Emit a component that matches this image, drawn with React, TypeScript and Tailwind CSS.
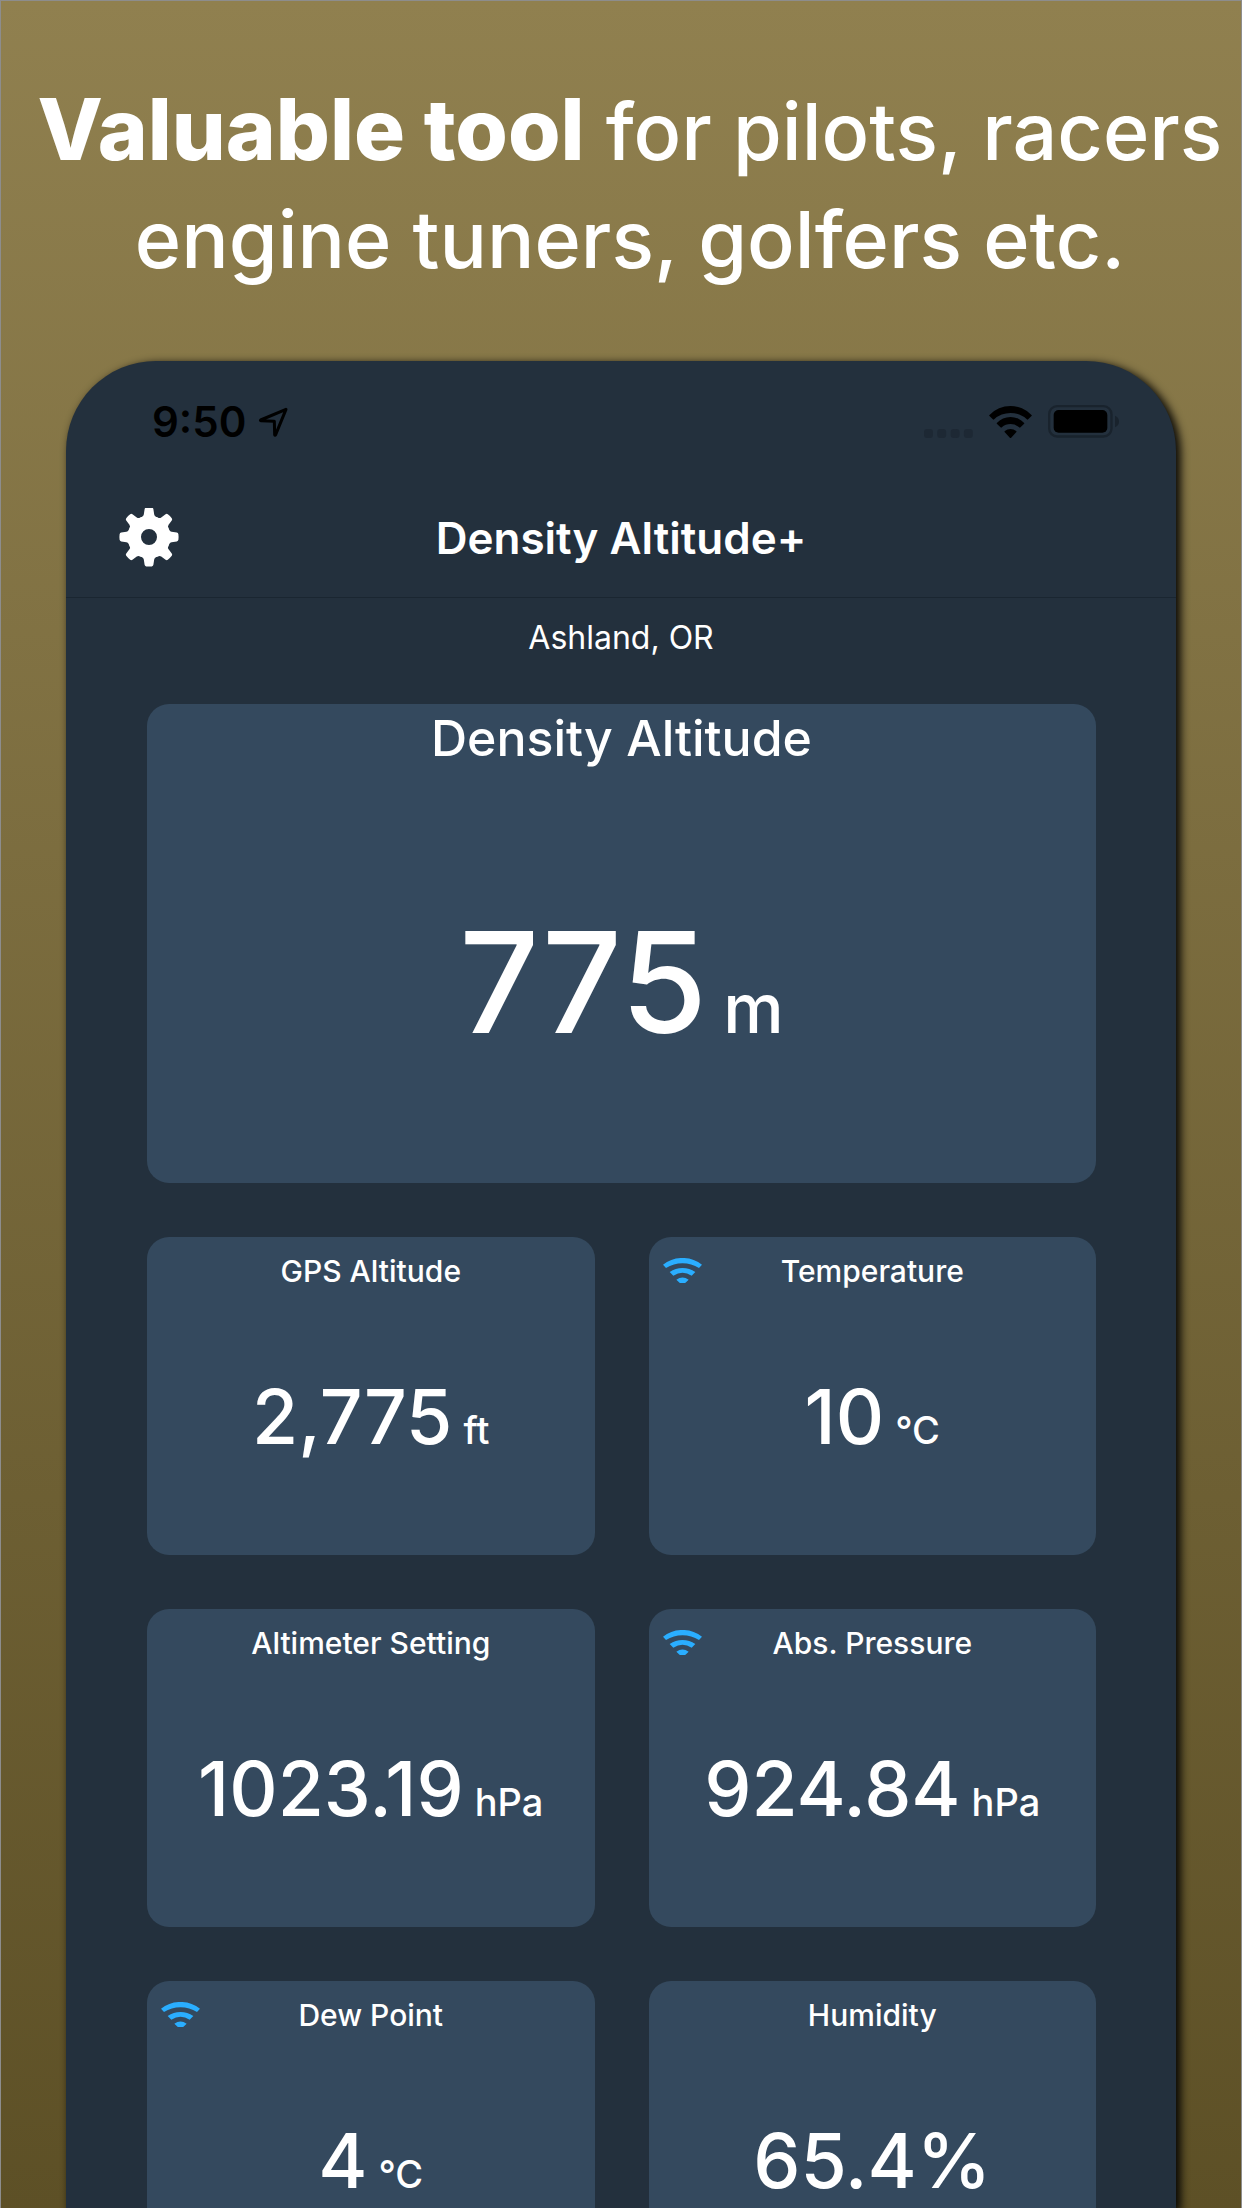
type Reading = {
  label: string;
  value: string;
  unit?: string;
  live?: boolean;
};

const readings: Reading[] = [
  { label: "GPS Altitude", value: "2,775", unit: "ft" },
  { label: "Temperature", value: "10", unit: "°C", live: true },
  { label: "Altimeter Setting", value: "1023.19", unit: "hPa" },
  { label: "Abs. Pressure", value: "924.84", unit: "hPa", live: true },
  { label: "Dew Point", value: "4", unit: "°C", live: true },
  { label: "Humidity", value: "65.4%" },
];

function GearIcon() {
  return (
    <svg className="size-[60px]" viewBox="-30 -29 60 60" fill="white" aria-hidden="true">
      <path
        fillRule="evenodd"
        d="M0-21.5A21.5 21.5 0 1 1 0 21.5A21.5 21.5 0 1 1 0-21.5ZM0-8A8 8 0 1 0 0 8A8 8 0 1 0 0-8Z"
      />
      {[0, 45, 90, 135, 180, 225, 270, 315].map((angle) => (
        <path
          key={angle}
          transform={`rotate(${angle})`}
          d="M-8-19.6Q-5.4-20.6-5.2-22.500L-4.4-27.8Q-4.2-29.2-2.8-29.4Q0-29.8 2.8-29.4Q4.2-29.2 4.4-27.8L5.2-22.500Q5.4-20.6 8-19.6L5-16H-5Z"
        />
      ))}
    </svg>
  );
}

function LocationIcon() {
  return (
    <svg className="size-[30px]" viewBox="620 200 90 90" fill="none" aria-hidden="true">
      <path
        d="M704 207L628 239Q626 241 629 241.500L669 243L670 283Q671 286 673 283Z"
        stroke="black"
        strokeWidth="9"
        strokeLinejoin="round"
      />
    </svg>
  );
}

function SignalDots() {
  return (
    <svg className="h-[9px] w-[49px]" viewBox="0 0 148 27" fill="#1d2834" aria-hidden="true">
      {[0, 40, 80.5, 120.500].map((x) => (
        <rect key={x} x={x} width="27" height="27" rx="9" />
      ))}
    </svg>
  );
}

function StatusWifiIcon() {
  return (
    <svg className="h-8 w-[43px]" viewBox="416 195 128 96" fill="black" aria-hidden="true">
      <path d="M417 222A87 87 0 0 1 543 222Q545 223 543 225L533 235Q531 237 529 235A72 72 0 0 0 431 235Q429 237 427 235L417 225Q415 223 417 222Z" />
      <path d="M439 246A56 56 0 0 1 521 246Q522 247 521 248L510 259Q508 261 506 259A39 39 0 0 0 454 259Q452 261 450 259L439 248Q438 247 439 246Z" />
      <path d="M463 270A26 26 0 0 1 497 270Q499 272 497 274L482 290Q480 292 478 290L463 274Q461 272 463 270Z" />
    </svg>
  );
}

function BatteryIcon() {
  return (
    <svg className="h-[33px] w-[71px]" viewBox="594 195 213 99" aria-hidden="true">
      <rect x="597.500" y="198.500" width="187" height="91" rx="24" fill="none" stroke="#19232d" strokeWidth="7" />
      <rect x="611" y="210" width="161" height="68" rx="15" fill="black" />
      <path d="M795 227Q807 232 807 244.500Q807 257 795 262Z" fill="#19232d" />
    </svg>
  );
}

function LiveIcon() {
  return (
    <svg className="h-[25px] w-[39px]" viewBox="97 114 117 75" fill="#2aaeff" role="img" aria-label="Live data">
      <path d="M97 134A95 95 0 0 1 214 134L205 144A94 94 0 0 0 106 144Z" />
      <path d="M117 156A68 68 0 0 1 194 156L183 167A52 52 0 0 0 128 167Z" />
      <path d="M137 179A32 32 0 0 1 174 179L166 187A14 14 0 0 1 145 187Z" />
    </svg>
  );
}

function ReadingCard({ label, value, unit, live }: Reading) {
  return (
    <section className="relative rounded-[22px] bg-[#34495e] pt-[14px] pb-[88px] text-center">
      {live && (
        <span className="absolute top-[21px] left-[14px]">
          <LiveIcon />
        </span>
      )}
      <h3 className="text-[30px] leading-[40px] font-medium">{label}</h3>
      <p className="mt-[76px] flex items-baseline justify-center gap-[11px] text-[75px] leading-[100px] font-medium">
        {value}
        {unit && <span className="text-[38px] leading-none">{unit}</span>}
      </p>
    </section>
  );
}

export default function App() {
  return (
    <main className="flex h-screen flex-col overflow-hidden border-x border-t border-[#8d8d8d] bg-linear-to-b from-[#90804f] to-[#5d5026] px-[65px] pt-[76px] font-['Inter','Liberation_Sans',sans-serif] text-white">
      <h1 className="-mx-[65px] pl-[18px] text-center text-[79px] leading-[108px] font-medium whitespace-nowrap">
        <span className="text-[85px] leading-none font-extrabold">Valuable tool</span> for pilots, racers
        <br />
        engine tuners, golfers etc.
      </h1>

      <div className="mt-[68px] min-h-0 flex-1 rounded-t-[90px] bg-[#23303d] shadow-[4px_3px_9px_1px_rgba(0,0,0,0.9)]">
        <div className="flex h-[118px] items-center justify-between pt-[3px] pr-[57px] pl-[86px] text-black">
          <div className="flex items-center gap-3">
            <time className="text-[42px] leading-none font-semibold">9:50</time>
            <LocationIcon />
          </div>
          <div className="flex items-end gap-4">
            <SignalDots />
            <StatusWifiIcon />
            <BatteryIcon />
          </div>
        </div>

        <header className="grid grid-cols-[1fr_auto_1fr] items-center border-b border-[#1a2631] px-[53px]">
          <button type="button" aria-label="Settings" className="justify-self-start">
            <GearIcon />
          </button>
          <h2 className="text-[44px] leading-[118px] font-semibold">Density Altitude+</h2>
        </header>

        <p className="pt-5 pb-[46px] text-center text-[32px] leading-[40px]">Ashland, OR</p>

        <div className="flex flex-col gap-[54px] pr-20 pl-[81px]">
          <section className="rounded-[22px] bg-[#34495e] pt-1 pb-[126px] text-center">
            <h3 className="text-[50px] leading-[60px] font-medium">Density Altitude</h3>
            <p className="mt-[139px] flex items-baseline justify-center gap-4 text-[140px] leading-[150px] font-medium">
              775<span className="text-[68px] leading-none">m</span>
            </p>
          </section>

          <div className="grid grid-cols-2 gap-[54px]">
            {readings.map((reading) => (
              <ReadingCard key={reading.label} {...reading} />
            ))}
          </div>
        </div>
      </div>
    </main>
  );
}
